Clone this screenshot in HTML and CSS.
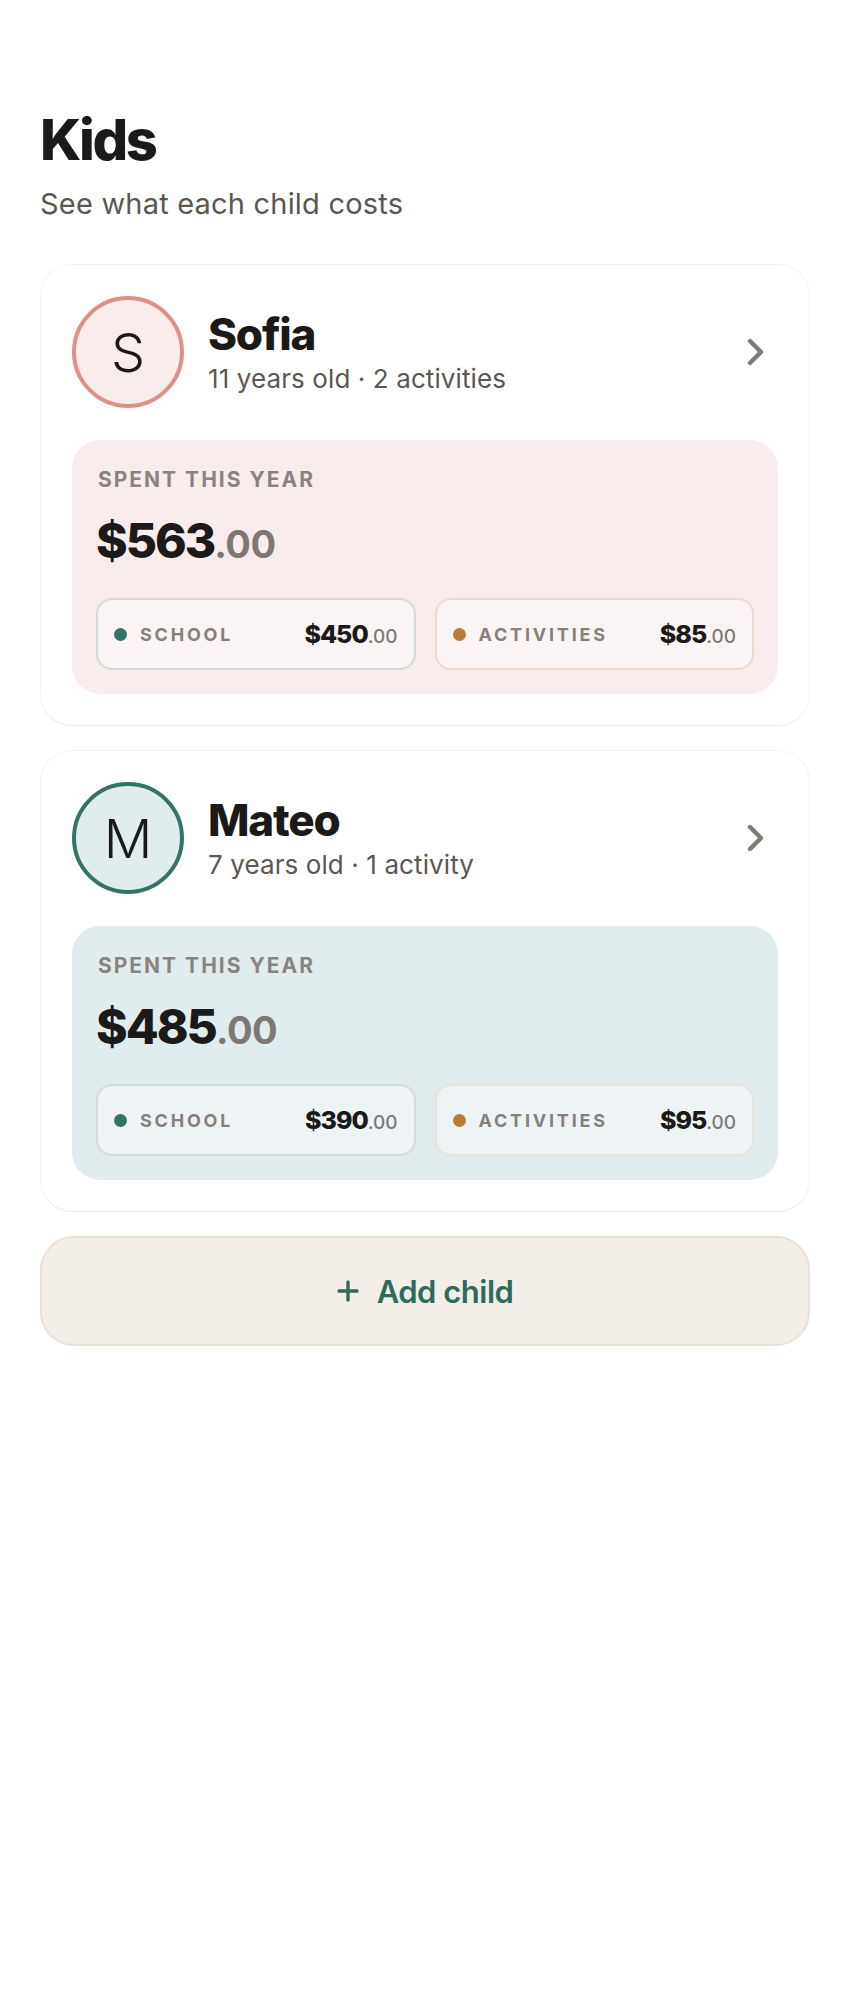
FILE: index.html
```html
<!DOCTYPE html>
<html lang="en">
<head>
  <meta charset="UTF-8">
  <meta name="viewport" content="width=device-width, initial-scale=1.0">
  <title>Kids</title>
  <link rel="stylesheet" href="styles.css">
</head>
<body>
  <main class="page">
    <header class="page-header">
      <h1 class="page-title">Kids</h1>
      <p class="page-subtitle">See what each child costs</p>
    </header>

    <div class="kid-list">
      <!-- Sofia -->
      <article class="kid-card pink">
        <div class="kid-head">
          <div class="avatar">S</div>
          <div class="kid-info">
            <h2 class="kid-name">Sofia</h2>
            <p class="kid-meta">11 years old · 2 activities</p>
          </div>
          <svg class="chevron" viewBox="0 0 24 24" fill="none" stroke="currentColor" stroke-width="2.2" stroke-linecap="round" stroke-linejoin="round"><path d="m10 17.5 5.5-5.5-5.5-5.5"/></svg>
        </div>
        <div class="spent">
          <div class="spent-label">Spent this year</div>
          <div class="spent-total">$563<span class="cents">.00</span></div>
          <div class="split">
            <div class="split-item school">
              <span class="dot"></span>
              <span class="split-name">School</span>
              <span class="split-amount">$450<span class="cents">.00</span></span>
            </div>
            <div class="split-item activities">
              <span class="dot"></span>
              <span class="split-name">Activities</span>
              <span class="split-amount">$85<span class="cents">.00</span></span>
            </div>
          </div>
        </div>
      </article>

      <!-- Mateo -->
      <article class="kid-card blue">
        <div class="kid-head">
          <div class="avatar">M</div>
          <div class="kid-info">
            <h2 class="kid-name">Mateo</h2>
            <p class="kid-meta">7 years old · 1 activity</p>
          </div>
          <svg class="chevron" viewBox="0 0 24 24" fill="none" stroke="currentColor" stroke-width="2.2" stroke-linecap="round" stroke-linejoin="round"><path d="m10 17.5 5.5-5.5-5.5-5.5"/></svg>
        </div>
        <div class="spent">
          <div class="spent-label">Spent this year</div>
          <div class="spent-total">$485<span class="cents">.00</span></div>
          <div class="split">
            <div class="split-item school">
              <span class="dot"></span>
              <span class="split-name">School</span>
              <span class="split-amount">$390<span class="cents">.00</span></span>
            </div>
            <div class="split-item activities">
              <span class="dot"></span>
              <span class="split-name">Activities</span>
              <span class="split-amount">$95<span class="cents">.00</span></span>
            </div>
          </div>
        </div>
      </article>
    </div>

    <button class="add-child">
      <svg class="plus" viewBox="0 0 22 22" fill="none" stroke="currentColor" stroke-width="3.4" stroke-linecap="round"><path d="M11 2v18M2 11h18"/></svg>
      <span>Add child</span>
    </button>
  </main>
</body>
</html>
```

FILE: styles.css
```css
body {
  margin: 0;
  background: #ffffff;
  font-family: "Inter", "Liberation Sans", sans-serif;
  color: #1c1a18;
}
.page {
  padding: 108px 40px 40px 40px;
}
.page-title {
  margin: 0;
  font-size: 56px;
  line-height: 64px;
  font-weight: 800;
  letter-spacing: -2.5px;
}
.page-subtitle {
  margin: 12px 0 0 0;
  font-size: 29px;
  line-height: 40px;
  color: #5c5651;
  letter-spacing: 0.2px;
}
.kid-list {
  margin-top: 40px;
  display: flex;
  flex-direction: column;
  gap: 24px;
}
.kid-card {
  border: 1px solid #f4f2f0;
  border-bottom-color: #ebe9e7;
  border-radius: 32px;
  padding: 31px;
  background: #fff;
}
.kid-head {
  display: flex;
  align-items: center;
  gap: 24px;
}
.avatar {
  width: 104px;
  height: 104px;
  border-radius: 50%;
  border: 4px solid;
  display: flex;
  align-items: center;
  justify-content: center;
  font-size: 54px;
  font-weight: 300;
  color: #1c1a18;
  flex-shrink: 0;
}
.pink .avatar {
  background: #f8ecec;
  border-color: #dd8f8c;
}
.blue .avatar {
  background: #e1ecee;
  border-color: #357465;
}
.kid-info {
  flex-grow: 1;
}
.kid-name {
  margin: 0;
  font-size: 44px;
  line-height: 52px;
  font-weight: 800;
  letter-spacing: -1.2px;
}
.kid-meta {
  margin: 2px 0 0 0;
  font-size: 26px;
  line-height: 34px;
  color: #5d5652;
  letter-spacing: 0.1px;
}
.chevron {
  width: 48px;
  height: 48px;
  color: #807a74;
  flex-shrink: 0;
}
.spent {
  margin-top: 32px;
  border-radius: 28px;
  padding: 24px;
}
.pink .spent {
  background: #f8ecec;
}
.blue .spent {
  background: #e1ecee;
}
.spent-label {
  font-size: 21px;
  line-height: 30px;
  font-weight: 700;
  letter-spacing: 2px;
  text-transform: uppercase;
  color: #8a847f;
  padding-left: 2px;
  padding-top: 1px;
}
.spent-total {
  margin-top: 18px;
  font-size: 48px;
  line-height: 56px;
  font-weight: 800;
  letter-spacing: -2px;
}
.spent-total .cents {
  font-size: 38px;
  font-weight: 700;
  color: #7d7873;
  letter-spacing: -0.5px;
}
.split {
  margin-top: 26px;
  display: flex;
  gap: 19px;
}
.split-item {
  flex: 1;
  height: 72px;
  box-sizing: border-box;
  border: 2px solid;
  border-radius: 16px;
  padding: 0 16px;
  display: flex;
  align-items: center;
  gap: 13px;
  background: rgba(255, 255, 255, 0.45);
}
.split-item.school {
  border-color: #d3ddd7;
}
.split-item.activities {
  border-color: #efd9cc;
}
.blue .split-item.activities {
  border-color: #ebe2d8;
}
.dot {
  width: 13px;
  height: 13px;
  border-radius: 50%;
  flex-shrink: 0;
}
.school .dot {
  background: #2f7565;
}
.activities .dot {
  background: #b97b35;
}
.split-name {
  flex-grow: 1;
  font-size: 18px;
  font-weight: 700;
  letter-spacing: 2.8px;
  text-transform: uppercase;
  color: #86807b;
}
.split-amount {
  font-size: 25px;
  font-weight: 800;
  letter-spacing: -1px;
}
.split-amount .cents {
  font-size: 19px;
  font-weight: 500;
  color: #7d7873;
  letter-spacing: 0;
}
.add-child {
  margin-top: 24px;
  width: 100%;
  height: 110px;
  border: 2px solid #e7e1d6;
  border-radius: 34px;
  background: #f3efe8;
  display: flex;
  align-items: center;
  justify-content: center;
  gap: 18px;
  font-family: inherit;
  font-size: 31px;
  font-weight: 600;
  color: #2f6b5c;
  letter-spacing: -0.5px;
}
.plus {
  width: 22px;
  height: 22px;
}
```
